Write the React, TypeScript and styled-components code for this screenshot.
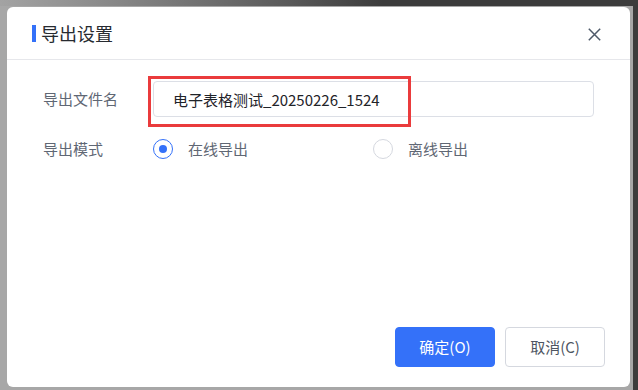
import React from "react";
import styled, { createGlobalStyle } from "styled-components";

const Global = createGlobalStyle`
  html, body { margin: 0; padding: 0; background: #3c3c3c; }
  * { box-sizing: border-box; }
  body { font-family: "Noto Sans CJK SC", "Noto Sans", sans-serif; }
`;

const Stage = styled.div`
  width: 638px;
  height: 390px;
  padding: 7px 8px 3px 7px;
  display: flex;
  background:
    linear-gradient(to right, transparent 633px, #3c3c3c 633px),
    linear-gradient(to right, #a3a3a3 0, #8c8c8c 15%, #5a5a5a 45%, #3c3c3c 60%, #3c3c3c 100%) top / 100% 6px no-repeat,
    #a7a7a7;
`;

const Dialog = styled.div`
  flex: 1;
  display: flex;
  flex-direction: column;
  background: #fff;
  border-radius: 6px;
`;

const Header = styled.div`
  height: 53px;
  display: flex;
  align-items: center;
  padding: 0 29px 0 25px;
  border-bottom: 1px solid #e6e7eb;
`;

const Title = styled.div`
  flex: 1;
  display: flex;
  align-items: center;
  gap: 5px;
  font-size: 18px;
  color: #262a30;
  line-height: 1;
  &::before {
    content: "";
    width: 4px;
    height: 17px;
    background: #3471f9;
  }
`;

const Close = styled.button`
  width: 14px;
  height: 14px;
  padding: 0;
  border: 0;
  background: none;
  display: flex;
  align-items: center;
  justify-content: center;
  margin-top: 3px;
`;

const Body = styled.div`
  padding: 21px 36px 0 36px;
  display: flex;
  flex-direction: column;
  gap: 14px;
`;

const Row = styled.div`
  display: flex;
  align-items: center;
  height: 36px;
`;

const Label = styled.div`
  width: 110px;
  font-size: 15px;
  color: #5f6774;
  margin-top: -2px;
`;

const Field = styled.div`
  position: relative;
  flex: 1;
  height: 36px;
`;

const Input = styled.div`
  height: 36px;
  border: 1px solid #dcdfe6;
  border-radius: 4px;
  padding-left: 19px;
  display: flex;
  align-items: center;
  font-size: 15px;
  color: #1f2329;
`;

const Highlight = styled.div`
  position: absolute;
  left: -5px;
  top: -5px;
  width: 263px;
  height: 51px;
  border: 3px solid #ea3b3c;
  pointer-events: none;
`;

const RadioItem = styled.label`
  width: 220px;
  display: flex;
  align-items: center;
  gap: 15px;
  font-size: 15px;
  color: #5f6774;
`;

const RadioDot = styled.span<{ $checked?: boolean }>`
  width: 20px;
  height: 20px;
  border-radius: 50%;
  border: 1px solid ${(p) => (p.$checked ? "#3471f9" : "#d5d8df")};
  display: flex;
  align-items: center;
  justify-content: center;
  &::after {
    content: "";
    width: 8px;
    height: 8px;
    border-radius: 50%;
    background: ${(p) => (p.$checked ? "#3471f9" : "transparent")};
  }
`;

const RadioText = styled.span`
  margin-top: -2px;
`;

const Footer = styled.div`
  margin-top: auto;
  display: flex;
  justify-content: flex-end;
  gap: 10px;
  padding: 0 25px 20px 0;
`;

const Button = styled.button<{ $primary?: boolean }>`
  width: 100px;
  height: 40px;
  border-radius: 4px;
  font-family: "Noto Sans CJK SC", "Noto Sans", sans-serif;
  font-size: 15px;
  border: 1px solid ${(p) => (p.$primary ? "#3471f9" : "#d5d8df")};
  background: ${(p) => (p.$primary ? "#3471f9" : "#fff")};
  color: ${(p) => (p.$primary ? "#fff" : "#4e5562")};
  padding: 0 0 2px;
`;

export default function App() {
  return (
    <>
      <Global />
      <Stage>
        <Dialog>
          <Header>
            <Title>导出设置</Title>
            <Close aria-label="close">
              <svg width="13" height="13" viewBox="0 0 13 13">
                <path d="M0.8 0.8 L12.2 12.2 M12.2 0.8 L0.8 12.2" stroke="#4e5969" strokeWidth="1.5" fill="none" />
              </svg>
            </Close>
          </Header>
          <Body>
            <Row>
              <Label>导出文件名</Label>
              <Field>
                <Input>电子表格测试_20250226_1524</Input>
                <Highlight />
              </Field>
            </Row>
            <Row>
              <Label>导出模式</Label>
              <RadioItem>
                <RadioDot $checked />
                <RadioText>在线导出</RadioText>
              </RadioItem>
              <RadioItem>
                <RadioDot />
                <RadioText>离线导出</RadioText>
              </RadioItem>
            </Row>
          </Body>
          <Footer>
            <Button $primary>确定(O)</Button>
            <Button>取消(C)</Button>
          </Footer>
        </Dialog>
      </Stage>
    </>
  );
}
